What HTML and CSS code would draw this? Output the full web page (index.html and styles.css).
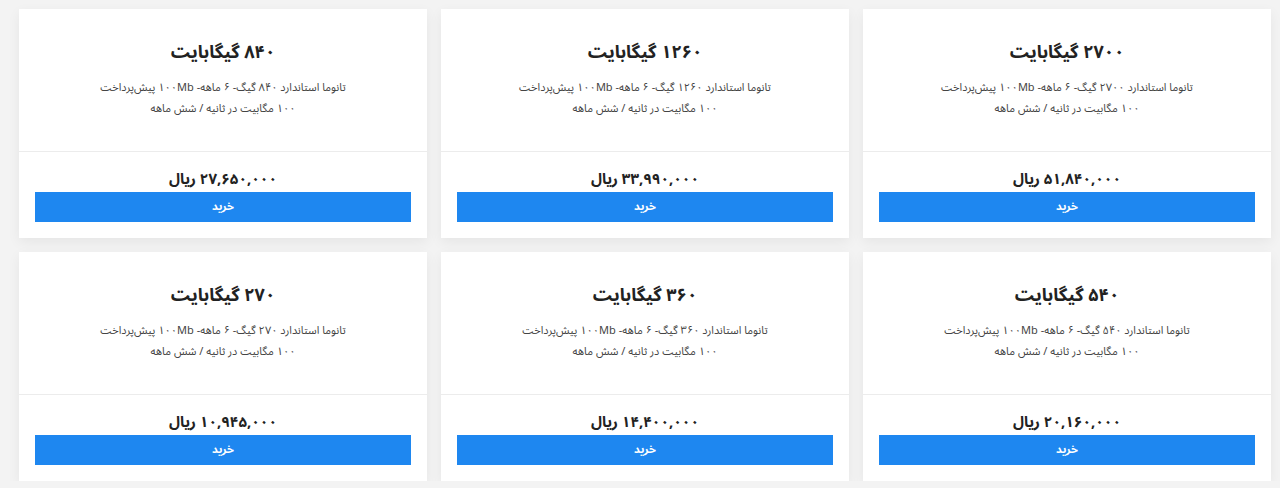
FILE: index.html
```html
<!DOCTYPE html>
<html lang="fa" dir="rtl">

<head>
    <meta charset="UTF-8">
    <meta name="viewport" content="width=device-width, initial-scale=1.0">
    <title>بسته‌های اینترنت</title>
    <link rel="stylesheet" href="styles.css">
</head>

<body>
    <div class="plans">
        <div class="card">
            <div class="card-body">
                <h3 class="title">۲۷۰۰ گیگابایت</h3>
                <p class="desc">تانوما استاندارد ۲۷۰۰ گیگ- ۶ ماهه- ۱۰۰Mb پیش‌پرداخت<br>۱۰۰ مگابیت در ثانیه / شش ماهه</p>
            </div>
            <div class="card-footer">
                <div class="price">۵۱,۸۴۰,۰۰۰ ریال</div>
                <a href="#" class="btn">خرید</a>
            </div>
        </div>
        <div class="card">
            <div class="card-body">
                <h3 class="title">۱۲۶۰ گیگابایت</h3>
                <p class="desc">تانوما استاندارد ۱۲۶۰ گیگ- ۶ ماهه- ۱۰۰Mb پیش‌پرداخت<br>۱۰۰ مگابیت در ثانیه / شش ماهه</p>
            </div>
            <div class="card-footer">
                <div class="price">۳۳,۹۹۰,۰۰۰ ریال</div>
                <a href="#" class="btn">خرید</a>
            </div>
        </div>
        <div class="card">
            <div class="card-body">
                <h3 class="title">۸۴۰ گیگابایت</h3>
                <p class="desc">تانوما استاندارد ۸۴۰ گیگ- ۶ ماهه- ۱۰۰Mb پیش‌پرداخت<br>۱۰۰ مگابیت در ثانیه / شش ماهه</p>
            </div>
            <div class="card-footer">
                <div class="price">۲۷,۶۵۰,۰۰۰ ریال</div>
                <a href="#" class="btn">خرید</a>
            </div>
        </div>
        <div class="card">
            <div class="card-body">
                <h3 class="title">۵۴۰ گیگابایت</h3>
                <p class="desc">تانوما استاندارد ۵۴۰ گیگ- ۶ ماهه- ۱۰۰Mb پیش‌پرداخت<br>۱۰۰ مگابیت در ثانیه / شش ماهه</p>
            </div>
            <div class="card-footer">
                <div class="price">۲۰,۱۶۰,۰۰۰ ریال</div>
                <a href="#" class="btn">خرید</a>
            </div>
        </div>
        <div class="card">
            <div class="card-body">
                <h3 class="title">۳۶۰ گیگابایت</h3>
                <p class="desc">تانوما استاندارد ۳۶۰ گیگ- ۶ ماهه- ۱۰۰Mb پیش‌پرداخت<br>۱۰۰ مگابیت در ثانیه / شش ماهه</p>
            </div>
            <div class="card-footer">
                <div class="price">۱۴,۴۰۰,۰۰۰ ریال</div>
                <a href="#" class="btn">خرید</a>
            </div>
        </div>
        <div class="card">
            <div class="card-body">
                <h3 class="title">۲۷۰ گیگابایت</h3>
                <p class="desc">تانوما استاندارد ۲۷۰ گیگ- ۶ ماهه- ۱۰۰Mb پیش‌پرداخت<br>۱۰۰ مگابیت در ثانیه / شش ماهه</p>
            </div>
            <div class="card-footer">
                <div class="price">۱۰,۹۴۵,۰۰۰ ریال</div>
                <a href="#" class="btn">خرید</a>
            </div>
        </div>
    </div>
</body>

</html>
```

FILE: styles.css
```css
* {
    margin: 0;
    padding: 0;
    box-sizing: border-box;
}

a {
    text-decoration: none;
}

body {
    background-color: #f3f3f3;
    font-family: "Noto Sans Arabic", "DejaVu Sans", sans-serif;
    color: #222;
}

.plans {
    display: grid;
    grid-template-columns: repeat(3, 1fr);
    gap: 14px;
    padding: 9px 9px 0 19px;
}

.card {
    display: flex;
    flex-direction: column;
    background-color: #fff;
    box-shadow: 0 4px 12px rgba(0, 0, 0, 0.06);
    text-align: center;
}

.card .card-body {
    height: 142px;
    padding-top: 31px;
}

.card .title {
    font-size: 18px;
    font-weight: bold;
    line-height: 24px;
    color: #222;
}

.card .desc {
    margin-top: 13px;
    font-size: 11px;
    line-height: 21px;
    color: #444;
}

.card .card-footer {
    flex: 1;
    padding: 17px 16px 16px;
    border-top: 1px solid #ececec;
}

.card .price {
    font-size: 15px;
    font-weight: bold;
    line-height: 20px;
    color: #222;
}

.card .btn {
    display: block;
    height: 30px;
    margin-top: 3px;
    background-color: #1e87f0;
    color: #fff;
    font-size: 11px;
    font-weight: bold;
    line-height: 30px;
}
```
